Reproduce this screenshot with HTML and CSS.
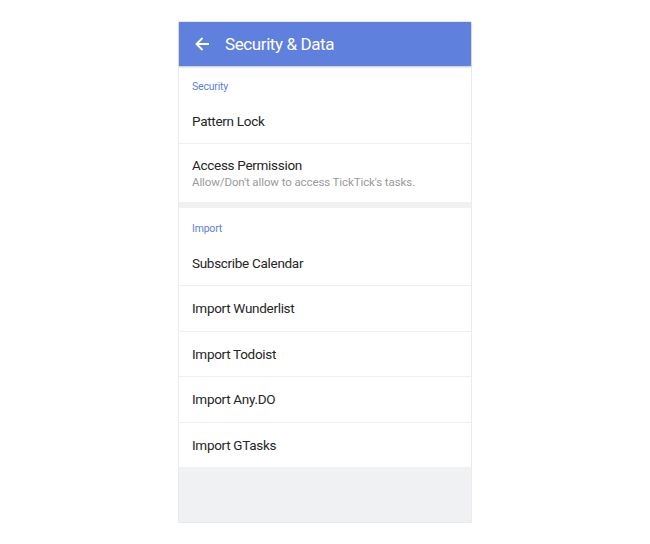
FILE: index.html
```html
<!DOCTYPE html>
<html>
<head>
<meta charset="utf-8">
<link rel="stylesheet" href="styles.css">
</head>
<body>
<div class="phone">
  <header class="bar">
    <svg class="back" width="14" height="14" viewBox="0 0 14 14"><path d="M14 7H1.5M7.5 1L1.5 7l6 6" fill="none" stroke="#fff" stroke-width="1.8"/></svg>
    <span class="title">Security &amp; Data</span>
  </header>
  <section class="group">
    <div class="label">Security</div>
    <div class="row">Pattern Lock</div>
    <div class="row two">
      <div class="main">Access Permission</div>
      <div class="sub">Allow/Don't allow to access TickTick's tasks.</div>
    </div>
  </section>
  <div class="gap"></div>
  <section class="group">
    <div class="label">Import</div>
    <div class="row">Subscribe Calendar</div>
    <div class="row r">Import Wunderlist</div>
    <div class="row r">Import Todoist</div>
    <div class="row r">Import Any.DO</div>
    <div class="row r last">Import GTasks</div>
  </section>
  <div class="fill"></div>
</div>
</body>
</html>
```
FILE: styles.css
```css
html, body { margin: 0; padding: 0; background: #fff; }
body { font-family: Roboto, "Noto Sans", sans-serif; }
.phone {
  margin: 21px 0 0 178px;
  width: 292px;
  height: 500px;
  border: 1px solid #ebebee;
  display: flex;
  flex-direction: column;
  background: #fff;
}
.bar {
  height: 44px;
  background: #6080de;
  display: flex;
  align-items: center;
  box-shadow: 0 1px 2px rgba(0,0,0,0.25);
  position: relative;
  z-index: 1;
  flex: none;
}
.back { margin-left: 16px; margin-right: 16px; }
.title { color: #fff; font-size: 17px; letter-spacing: -0.4px; }
.group { display: flex; flex-direction: column; }
.label {
  color: #5b7fe0;
  font-size: 10.5px;
  letter-spacing: -0.2px;
  line-height: 14px;
  padding: 14px 0 5px 13px;
}
.row {
  height: 44px;
  display: flex;
  align-items: center;
  padding-left: 13px;
  font-size: 13.5px;
  letter-spacing: -0.3px;
  color: #262626;
  border-bottom: 1px solid #efefef;
}
.row.r { height: 44.5px; }
.row.last { border-bottom: none; }
.row.two {
  height: auto;
  flex-direction: column;
  align-items: flex-start;
  padding-top: 12px;
  padding-bottom: 12px;
  border-bottom: none;
}
.main { line-height: 18px; }
.sub { font-size: 11.5px; letter-spacing: -0.1px; line-height: 16px; color: #9a9a9a; }
.gap { height: 6px; background: #f0f1f3; flex: none; }
.fill { flex: 1; background: #f0f1f3; }
```
